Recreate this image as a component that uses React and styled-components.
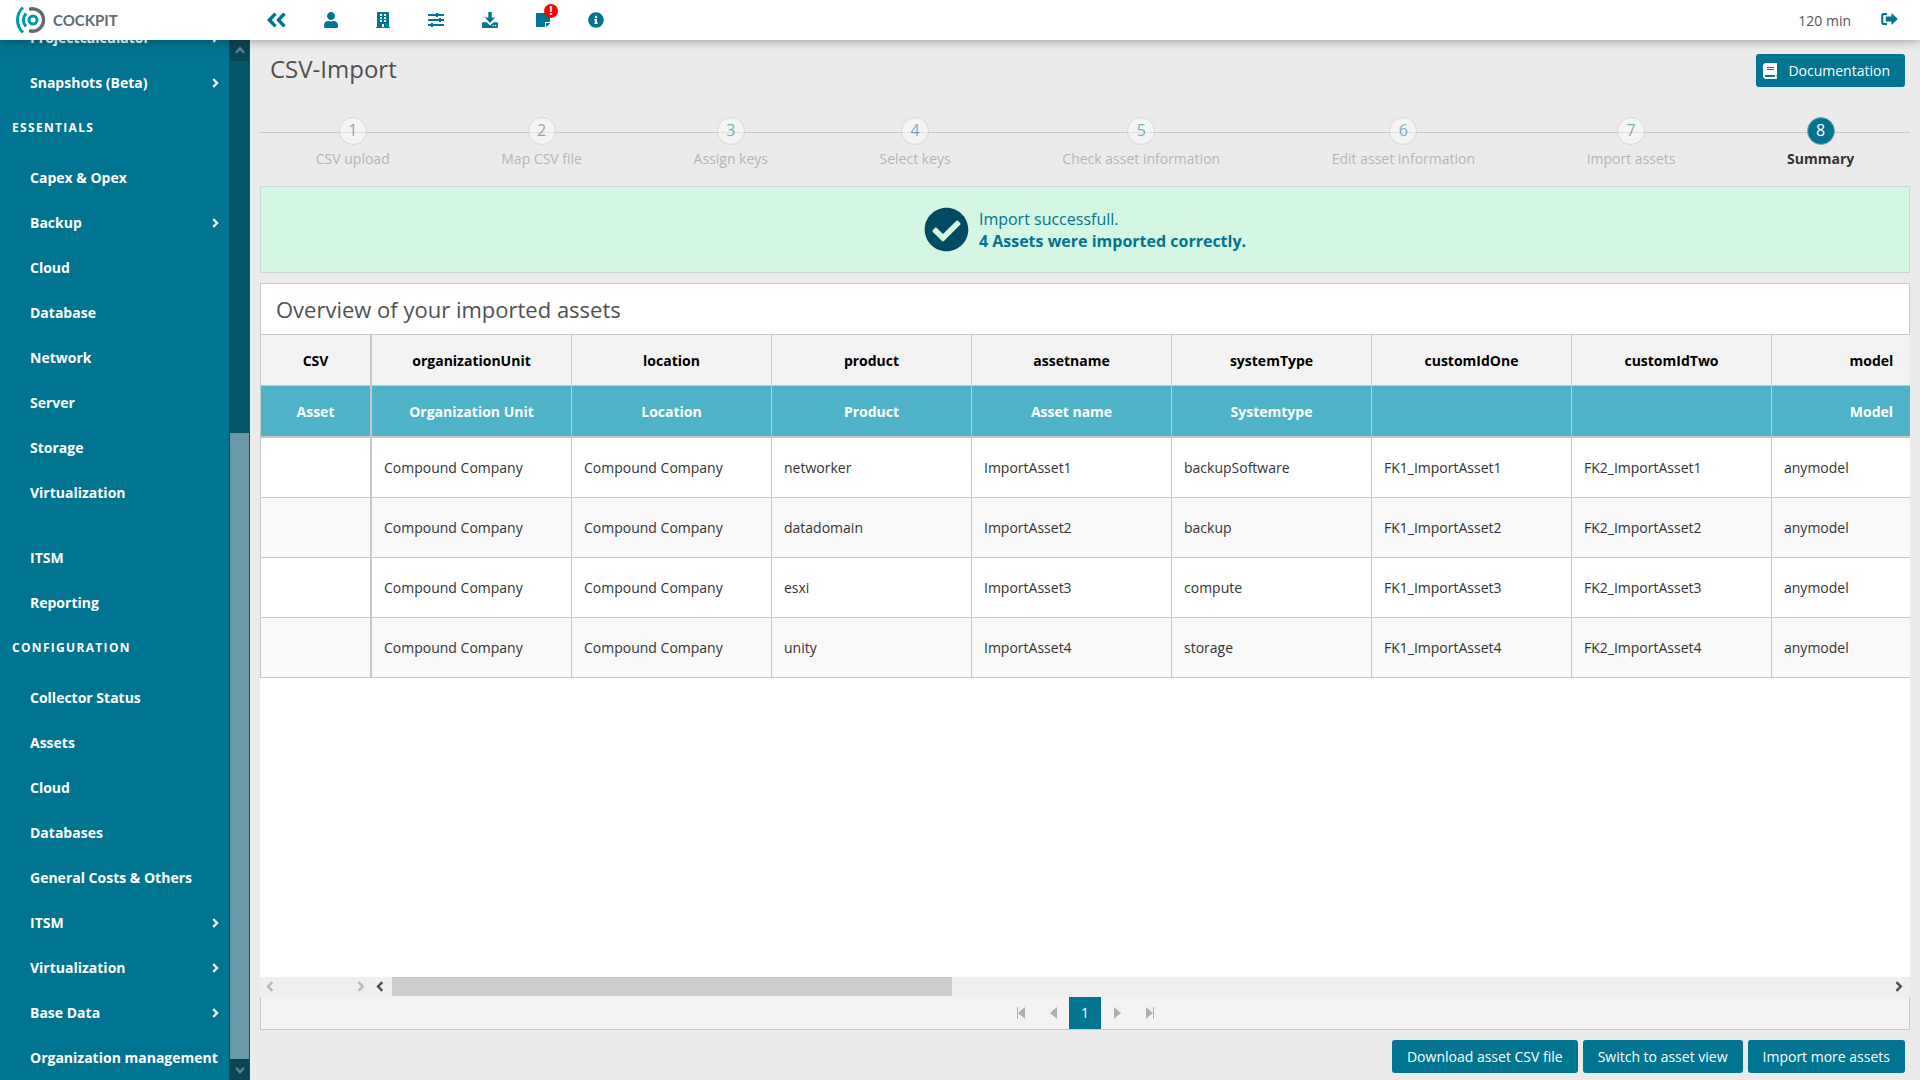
import React from "react";
import styled, { createGlobalStyle, css } from "styled-components";
import { FaUser, FaBuilding, FaStickyNote, FaInfoCircle, FaCheckCircle, FaBook } from "react-icons/fa";

const GlobalStyle = createGlobalStyle`
  * {
    box-sizing: border-box;
  }

  body {
    margin: 0;
    background: #ebebeb;
    color: #333;
    font-family: "Open Sans", "Noto Sans", sans-serif;
    font-size: 14px;
    line-height: 20px;
  }

  button {
    font: inherit;
    cursor: pointer;
  }
`;

const menu = [
  {
    items: [
      { label: "Projectcalculator", sub: true },
      { label: "Snapshots (Beta)", sub: true },
    ],
  },
  {
    title: "ESSENTIALS",
    items: [
      { label: "Capex & Opex" },
      { label: "Backup", sub: true },
      { label: "Cloud" },
      { label: "Database" },
      { label: "Network" },
      { label: "Server" },
      { label: "Storage" },
      { label: "Virtualization" },
    ],
  },
  { spaced: true, items: [{ label: "ITSM" }, { label: "Reporting" }] },
  {
    title: "CONFIGURATION",
    items: [
      { label: "Collector Status" },
      { label: "Assets" },
      { label: "Cloud" },
      { label: "Databases" },
      { label: "General Costs & Others" },
      { label: "ITSM", sub: true },
      { label: "Virtualization", sub: true },
      { label: "Base Data", sub: true },
      { label: "Organization management" },
    ],
  },
];

const steps = [
  "CSV upload",
  "Map CSV file",
  "Assign keys",
  "Select keys",
  "Check asset information",
  "Edit asset information",
  "Import assets",
  "Summary",
];

const columns = [
  ["organizationUnit", "Organization Unit"],
  ["location", "Location"],
  ["product", "Product"],
  ["assetname", "Asset name"],
  ["systemType", "Systemtype"],
  ["customIdOne", ""],
  ["customIdTwo", ""],
  ["model", "Model"],
];

const company = "Compound Company";

const rows = [
  [company, company, "networker", "ImportAsset1", "backupSoftware", "FK1_ImportAsset1", "FK2_ImportAsset1", "anymodel"],
  [company, company, "datadomain", "ImportAsset2", "backup", "FK1_ImportAsset2", "FK2_ImportAsset2", "anymodel"],
  [company, company, "esxi", "ImportAsset3", "compute", "FK1_ImportAsset3", "FK2_ImportAsset3", "anymodel"],
  [company, company, "unity", "ImportAsset4", "storage", "FK1_ImportAsset4", "FK2_ImportAsset4", "anymodel"],
];

const LogoMark = () => (
  <svg width="30" height="28" viewBox="0 0 30 28" fill="none" aria-hidden="true">
    <circle cx="17" cy="14" r="4" stroke="#0097b2" strokeWidth="3" />
    <path d="M10 7.5a9.5 9.5 0 0 0 0 13" stroke="#0097b2" strokeWidth="3" />
    <path d="M7 1.5a17 17 0 0 0 0 25" stroke="#0097b2" strokeWidth="3" />
    <path d="M13 3.3a11.2 11.2 0 1 1 0 21.4" stroke="#63696e" strokeWidth="3.4" />
  </svg>
);

const CollapseIcon = () => (
  <svg width="19" height="16" viewBox="0 0 19 16" fill="none" stroke="currentColor" strokeWidth="3.4" aria-hidden="true">
    <path d="M8.500 1.600 2.400 8l6.100 6.400M17.500 1.600 11.400 8l6.100 6.400" />
  </svg>
);

const SlidersIcon = () => (
  <svg width="16" height="16" viewBox="0 0 16 16" fill="currentColor" aria-hidden="true">
    <path d="M0 2h16v2H0zM0 7h16v2H0zM0 12h16v2H0z" />
    <path d="M8 1h2v4H8zM11 6h2v4h-2zM3 11h2v4H3z" />
  </svg>
);

const DownloadIcon = () => (
  <svg width="16" height="16" viewBox="0 0 16 16" fill="currentColor" aria-hidden="true">
    <path d="M6.3 0h3.4v5.5H13L8 11 3 5.500h3.300z" />
    <path
      fillRule="evenodd"
      d="M1 10.300h3.500L8 13.600l3.500-3.300H15a1 1 0 0 1 1 1V15a1 1 0 0 1-1 1H1a1 1 0 0 1-1-1v-3.700a1 1 0 0 1 1-1zM10.500 13v1.300h1.300V13zm2.500 0v1.300h1.300V13z"
    />
  </svg>
);

const LogoutIcon = () => (
  <svg width="17" height="14" viewBox="0 0 17 14" fill="currentColor" aria-hidden="true">
    <path d="M6 0H3A2.800 2.800 0 0 0 .2 2.800v6.400A2.800 2.800 0 0 0 3 12h3v-2H3.300a1 1 0 0 1-1-1V3a1 1 0 0 1 1-1H6z" />
    <path d="M10.500 0 16.800 6l-6.300 6V8.500H4.700v-5h5.800z" />
  </svg>
);

const Chevron = ({ to = "right", size = 8, weight = 2 }) => {
  const paths = {
    right: "M2 1l3.500 3.500L2 8",
    left: "M6 1 2.500 4.500 6 8",
    up: "M1 6l3.500-4L8 6",
    down: "M1 2.500l3.500 4 3.500-4",
  };
  return (
    <svg width={size} height={size} viewBox="0 0 9 9" fill="none" stroke="currentColor" strokeWidth={weight} aria-hidden="true">
      <path d={paths[to]} />
    </svg>
  );
};

const PageArrow = ({ back, edge }) => (
  <svg width="9" height="12" viewBox="0 0 9 12" fill="currentColor" aria-hidden="true">
    {back ? <path d="M8 0v12L1 6z" /> : <path d="M1 0v12l7-6z" />}
    {edge && (back ? <path d="M0 0h1v12H0z" /> : <path d="M8 0h1v12H8z" />)}
  </svg>
);

const App = () => {
  return (
    <>
      <GlobalStyle />
      <Page>
        <Topbar>
          <Brand href="#">
            <LogoMark />
            COCKPIT
          </Brand>
          <Tools>
            <IconButton aria-label="Collapse menu">
              <CollapseIcon />
            </IconButton>
            <IconButton aria-label="User" $narrow>
              <FaUser size={16} />
            </IconButton>
            <IconButton aria-label="Company" $narrow>
              <FaBuilding size={16} />
            </IconButton>
            <IconButton aria-label="Settings">
              <SlidersIcon />
            </IconButton>
            <IconButton aria-label="Downloads">
              <DownloadIcon />
            </IconButton>
            <IconButton aria-label="Notes" $narrow>
              <FaStickyNote size={16} />
              <Badge>!</Badge>
            </IconButton>
            <IconButton aria-label="Information">
              <FaInfoCircle size={16} />
            </IconButton>
          </Tools>
          <Session>120 min</Session>
          <IconButton aria-label="Log out">
            <LogoutIcon />
          </IconButton>
        </Topbar>

        <Body>
          <Sidebar>
            <Nav>
              {menu.map((group, i) => (
                <Group key={i} $spaced={group.spaced}>
                  {group.title && <GroupTitle>{group.title}</GroupTitle>}
                  {group.items.map((item) => (
                    <NavLink href="#" key={item.label}>
                      {item.label}
                      {item.sub && <Chevron size={10} weight={2} />}
                    </NavLink>
                  ))}
                </Group>
              ))}
            </Nav>
            <SideScroll>
              <SideArrow>
                <Chevron to="up" size={10} />
              </SideArrow>
              <SideTrack>
                <SideThumb />
              </SideTrack>
              <SideArrow>
                <Chevron to="down" size={10} />
              </SideArrow>
            </SideScroll>
          </Sidebar>

          <Main>
            <TitleRow>
              <Title>CSV-Import</Title>
              <DocButton>
                <FaBook size={16} />
                Documentation
              </DocButton>
            </TitleRow>

            <Steps>
              {steps.map((step, i) => (
                <Step key={step} $active={i === steps.length - 1}>
                  <StepNumber $active={i === steps.length - 1}>{i + 1}</StepNumber>
                  <span>{step}</span>
                </Step>
              ))}
            </Steps>

            <Success>
              <FaCheckCircle size={45} color="#004b64" />
              <div>
                Import successfull.
                <br />
                <b>4 Assets were imported correctly.</b>
              </div>
            </Success>

            <Panel>
              <PanelTitle>Overview of your imported assets</PanelTitle>
              <TableArea>
                <Table>
                  <colgroup>
                    <FrozenCol />
                    {columns.map(([key]) => (
                      <DataCol key={key} />
                    ))}
                  </colgroup>
                  <thead>
                    <tr>
                      <HeadCell>CSV</HeadCell>
                      {columns.map(([key]) => (
                        <HeadCell key={key}>{key}</HeadCell>
                      ))}
                    </tr>
                    <tr>
                      <HeadCell $asset>Asset</HeadCell>
                      {columns.map(([key, name]) => (
                        <HeadCell $asset key={key}>
                          {name}
                        </HeadCell>
                      ))}
                    </tr>
                  </thead>
                  <tbody>
                    {rows.map((row, i) => (
                      <Row key={i}>
                        <Cell />
                        {row.map((value, j) => (
                          <Cell key={j}>{value}</Cell>
                        ))}
                      </Row>
                    ))}
                  </tbody>
                </Table>
              </TableArea>
              <ScrollRow>
                <FrozenScroll>
                  <Chevron to="left" size={11} weight={2} />
                  <Chevron size={11} weight={2} />
                </FrozenScroll>
                <DataScroll>
                  <Chevron to="left" size={11} weight={2} />
                  <DataTrack>
                    <DataThumb />
                  </DataTrack>
                  <Chevron size={11} weight={2} />
                </DataScroll>
              </ScrollRow>
              <Paginator>
                <PageButton aria-label="First page">
                  <PageArrow back edge />
                </PageButton>
                <PageButton aria-label="Previous page">
                  <PageArrow back />
                </PageButton>
                <PageButton $current>1</PageButton>
                <PageButton aria-label="Next page">
                  <PageArrow />
                </PageButton>
                <PageButton aria-label="Last page">
                  <PageArrow edge />
                </PageButton>
              </Paginator>
            </Panel>

            <Actions>
              <Button>Download asset CSV file</Button>
              <Button>Switch to asset view</Button>
              <Button>Import more assets</Button>
            </Actions>
          </Main>
        </Body>
      </Page>
    </>
  );
};

const Page = styled.div`
  display: flex;
  flex-direction: column;
  height: 100vh;
  overflow: hidden;
`;

/* top bar */

const Topbar = styled.header`
  position: relative;
  z-index: 2;
  display: flex;
  align-items: center;
  flex: none;
  height: 40px;
  padding: 0 22px 0 16px;
  background: #fff;
  box-shadow: 0 0 10px rgba(0, 0, 0, 0.4);
`;

const Brand = styled.a`
  display: flex;
  align-items: center;
  gap: 7px;
  width: 251px;
  color: #63696e;
  font-family: Lato, sans-serif;
  font-size: 15px;
  font-weight: 700;
  text-decoration: none;
`;

const Tools = styled.div`
  display: flex;
  gap: 38px;
`;

const IconButton = styled.button`
  position: relative;
  display: flex;
  align-items: center;
  justify-content: center;
  width: ${(props) => (props.$narrow ? "14px" : "auto")};
  height: 20px;
  padding: 0;
  border: 0;
  background: none;
  color: #007491;
`;

const Badge = styled.span`
  position: absolute;
  top: -6px;
  left: 8px;
  width: 14px;
  height: 14px;
  border-radius: 50%;
  background: #f00;
  color: #fff;
  font-size: 12px;
  font-weight: 700;
  line-height: 14px;
`;

const Session = styled.span`
  margin: 0 30px 0 auto;
  color: #555;
  line-height: 22px;
  padding-top: 1px;
`;

/* side menu */

const Body = styled.div`
  display: flex;
  flex: 1;
  min-height: 0;
`;

const Sidebar = styled.aside`
  display: flex;
  flex: none;
  width: 250px;
  background: #007491;
`;

/* opened at the end of the list, the first entries run out under the top bar */
const Nav = styled.nav`
  display: flex;
  flex-direction: column;
  justify-content: flex-end;
  flex: 1;
  overflow: hidden;
`;

const Group = styled.div`
  flex: none;
  margin-top: ${(props) => (props.$spaced ? "20px" : "0")};
`;

const GroupTitle = styled.h2`
  margin: 0 0 4px;
  padding-left: 12px;
  color: #fff;
  font-size: 12px;
  font-weight: 700;
  line-height: 46px;
  letter-spacing: 0.11em;
`;

const NavLink = styled.a`
  display: flex;
  align-items: center;
  justify-content: space-between;
  height: 45px;
  padding: 0 8px 0 30px;
  color: #fff;
  font-weight: 700;
  text-decoration: none;
  white-space: nowrap;
`;

const SideScroll = styled.div`
  display: flex;
  flex-direction: column;
  width: 21px;
  background: #05566a;
`;

const SideArrow = styled.div`
  display: flex;
  align-items: center;
  justify-content: center;
  height: 21px;
  margin: 0 1px;
  background: #0b4553;
  color: #5a8592;
`;

const SideTrack = styled.div`
  display: flex;
  flex-direction: column;
  flex: 1;
  padding: 0 1px;

  &::before {
    content: "";
    flex: 372;
  }
`;

const SideThumb = styled.div`
  flex: 626;
  background: #6a98a6;
`;

/* content */

const Main = styled.main`
  display: flex;
  flex-direction: column;
  flex: 1;
  min-width: 0;
  padding: 14px 10px 7px;
`;

const TitleRow = styled.div`
  display: flex;
  align-items: flex-start;
  justify-content: space-between;
  padding: 0 5px 0 10px;
`;

const Title = styled.h1`
  margin: 0;
  color: #505050;
  font-size: 24px;
  font-weight: 400;
  line-height: 29px;
`;

const Button = styled.button`
  height: 33px;
  padding: 0 15px;
  border: 0;
  border-radius: 3px;
  background: #007491;
  color: #fff;
  white-space: nowrap;
`;

const DocButton = styled(Button)`
  display: flex;
  align-items: center;
  gap: 10px;
  padding-left: 6px;
`;

const Steps = styled.ol`
  display: flex;
  margin: 30px 0 17px;
  padding: 0;
  background: linear-gradient(#c8c8c8, #c8c8c8) 0 15px / 100% 1px no-repeat;
  list-style: none;
`;

const Step = styled.li`
  display: flex;
  flex-direction: column;
  align-items: center;
  flex: 1 1 auto;
  gap: 4px;
  color: ${(props) => (props.$active ? "#333" : "#808080")};
  font-weight: ${(props) => (props.$active ? 700 : 400)};
  opacity: ${(props) => (props.$active ? 1 : 0.5)};
`;

const StepNumber = styled.span`
  width: 28px;
  height: 28px;
  border: 1px solid #c8c8c8;
  border-radius: 50%;
  background: #fff;
  color: #007491;
  font-size: 16px;
  font-weight: 400;
  line-height: 24px;
  text-align: center;

  ${(props) =>
    props.$active &&
    css`
      border-color: #7fa9b5;
      background: #007491;
      color: #fff;
    `}
`;

const Success = styled.div`
  display: flex;
  align-items: center;
  justify-content: center;
  gap: 10px;
  height: 87px;
  margin-bottom: 10px;
  border: 1px solid #c8d7de;
  background: #d4f7e3;
  color: #007491;
  font-size: 16px;
  line-height: 22px;
`;

const Panel = styled.section`
  display: flex;
  flex-direction: column;
  flex: 1;
  min-height: 0;
  background: #fff;
`;

const PanelTitle = styled.h2`
  margin: 0;
  padding: 10px 15px 9px;
  border: 1px solid #c8c8c8;
  color: #505050;
  font-size: 22px;
  font-weight: 400;
  line-height: 31px;
`;

const TableArea = styled.div`
  flex: 1;
  min-height: 0;
  overflow: hidden;
`;

const Table = styled.table`
  width: 1712px;
  table-layout: fixed;
  border-spacing: 0;
`;

const FrozenCol = styled.col`
  width: 112px;
`;

const DataCol = styled.col`
  width: 200px;
`;

const cellBorders = css`
  border: solid #c8c8c8;
  border-width: 0 1px 1px 0;

  &:first-child {
    border-left-width: 1px;
    border-right-width: 2px;
  }
`;

const HeadCell = styled.th`
  height: ${(props) => (props.$asset ? "52px" : "51px")};
  padding: 2px 12px 0;
  background: ${(props) => (props.$asset ? "#4fb3c7" : "#f3f3f3")};
  color: ${(props) => (props.$asset ? "#fff" : "#000")};
  ${cellBorders}
  border-bottom-width: ${(props) => (props.$asset ? "2px" : "1px")};
`;

const Row = styled.tr`
  &:nth-child(even) {
    background: #f9f9f9;
  }
`;

const Cell = styled.td`
  height: 60px;
  padding: 0 12px;
  ${cellBorders}
`;

const ScrollRow = styled.div`
  display: flex;
  height: 20px;
  padding-bottom: 1px;
  background: #efefef;
`;

const FrozenScroll = styled.div`
  display: flex;
  align-items: center;
  justify-content: space-between;
  width: 112px;
  padding: 0 5px;
  color: #b8b8b8;
`;

const DataScroll = styled.div`
  display: flex;
  align-items: center;
  flex: 1;
  gap: 6px;
  padding: 0 5px 0 3px;
  color: #505050;
`;

const DataTrack = styled.div`
  display: flex;
  flex: 1;
  height: 100%;

  &::after {
    content: "";
    flex: 936;
  }
`;

const DataThumb = styled.div`
  flex: 560;
  background: #cdcdcd;
`;

const Paginator = styled.div`
  display: flex;
  justify-content: center;
  height: 33px;
  border: solid #c8c8c8;
  border-width: 0 1px 1px;
  background: #f3f3f3;
`;

const PageButton = styled.button`
  display: flex;
  align-items: center;
  justify-content: center;
  width: 32px;
  height: 32px;
  padding: 0;
  border: 0;
  background: ${(props) => (props.$current ? "#007491" : "none")};
  color: ${(props) => (props.$current ? "#fff" : "#b0b0b0")};
`;

const Actions = styled.div`
  display: flex;
  justify-content: flex-end;
  gap: 5px;
  padding: 10px 5px 0 0;
`;

export default App;
